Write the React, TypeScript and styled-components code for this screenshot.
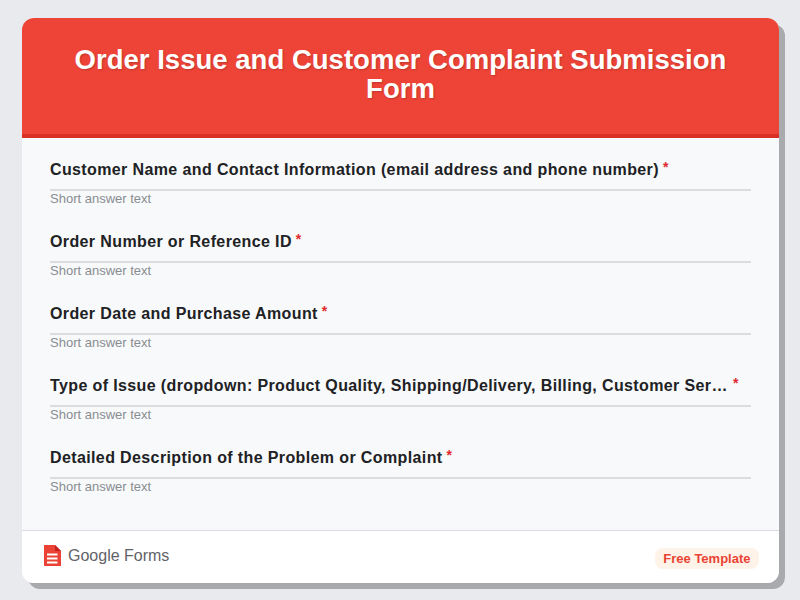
import React from "react";
import styled, { createGlobalStyle } from "styled-components";

const Global = createGlobalStyle`
  html, body { margin: 0; padding: 0; }
  body { width: 800px; height: 600px; background: #e8eaed; font-family: "Liberation Sans", Arial, sans-serif; overflow: hidden; }
`;
const Page = styled.div`
  width: 800px; height: 600px; box-sizing: border-box; padding: 18px 21px 17px 22px;
`;
const Card = styled.div`
  height: 100%; display: flex; flex-direction: column; overflow: hidden;
  background: #f8f9fa; border-radius: 12px;
  box-shadow: 6px 6px 0 #a8aaad;
`;
const Header = styled.header`
  height: 112px; box-sizing: content-box; background: #ee4437; border-bottom: 4px solid #d93025;
  padding: 0 40px 4px; display: flex; align-items: center; justify-content: center;
`;
const Title = styled.h1`
  margin: 0; color: #fff; font-size: 27.5px; letter-spacing: 0.02px; line-height: 29px; font-weight: 700;
  text-align: center; text-shadow: 1px 1px 2px rgba(0,0,0,0.2);
`;
const Body = styled.main`
  flex: 1; padding: 21px 28px 0; display: flex; flex-direction: column; gap: 14px; min-height: 0;
`;
const Question = styled.section`
  display: flex; flex-direction: column; height: 58px;
`;
const Label = styled.div`
  display: flex; align-items: flex-start; height: 22px; margin-bottom: 8px;
  font-size: 16px; letter-spacing: 0.38px; line-height: 22px; font-weight: 700; color: #202124;
`;
const LabelText = styled.span`
  white-space: nowrap; overflow: hidden; text-overflow: ellipsis; max-width: 679px;
`;
const Star = styled.span`
  color: #e0282e; font-size: 14px; letter-spacing: 0; line-height: 15px; margin: 1px 0 0 4px;
`;
const Answer = styled.div`
  border-top: 2px solid #dadce0; font-size: 13px; line-height: 15px; color: #888d92;
`;
const Footer = styled.footer`
  height: 52px; background: #fff; border-top: 1px solid #dadce0; display: flex; align-items: center;
  justify-content: space-between; padding: 0 20px 0 22px;
`;
const Brand = styled.div`
  display: flex; align-items: center; gap: 7px; font-size: 16px; color: #5f6368; margin-top: -2px;
`;
const BrandIcon = styled.svg`
  display: block; margin-bottom: 2px;
`;
const Badge = styled.div`
  background: #fef3e8; color: #ea4335; border-radius: 8px; font-size: 13px; font-weight: 700;
  line-height: 21px; padding: 0 8.5px; margin-top: 3px;
`;

const FormIcon = () => (
  <BrandIcon width="17" height="21" viewBox="0 0 17 21">
    <path d="M0 0H11L17 6V21H0Z" fill="#ea4335" />
    <path d="M11 0L17 6H11Z" fill="#c5221f" />
    <path d="M3 8.5H13.5V10.5H3ZM3 12.5H13.5V14.5H3ZM3 16.5H13.5V18.5H3Z" fill="#fff" />
  </BrandIcon>
);

const questions = [
  "Customer Name and Contact Information (email address and phone number)",
  "Order Number or Reference ID",
  "Order Date and Purchase Amount",
  "Type of Issue (dropdown: Product Quality, Shipping/Delivery, Billing, Customer Service, Other)",
  "Detailed Description of the Problem or Complaint",
];

export default function App() {
  return (
    <Page>
      <Global />
      <Card>
        <Header>
          <Title>Order Issue and Customer Complaint Submission Form</Title>
        </Header>
        <Body>
          {questions.map((q) => (
            <Question key={q}>
              <Label>
                <LabelText>{q}</LabelText>
                <Star>*</Star>
              </Label>
              <Answer>Short answer text</Answer>
            </Question>
          ))}
        </Body>
        <Footer>
          <Brand>
            <FormIcon />
            Google Forms
          </Brand>
          <Badge>Free Template</Badge>
        </Footer>
      </Card>
    </Page>
  );
}
